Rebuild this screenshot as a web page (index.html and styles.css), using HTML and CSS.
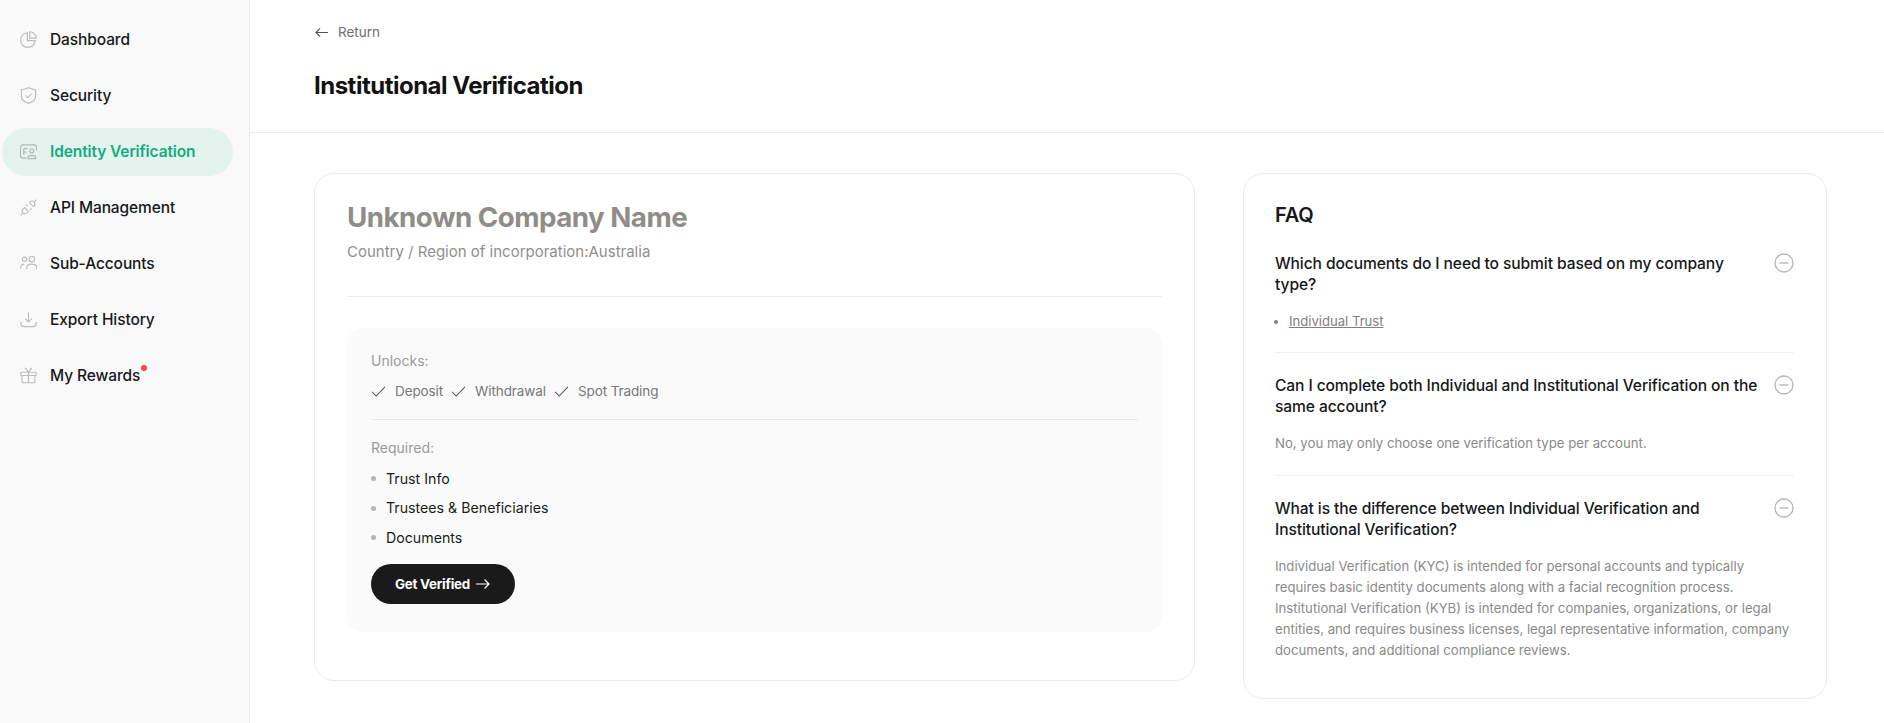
FILE: index.html
```html
<!DOCTYPE html>
<html lang="en">
<head>
<meta charset="utf-8">
<title>Institutional Verification</title>
<link rel="stylesheet" href="styles.css">
</head>
<body>
<div class="app">
  <aside class="sidebar">
    <a class="nav-item"><svg class="nav-icon" viewBox="0 0 18 18"><path d="M7.800 1.800a7.800 7.800 0 1 0 8.400 8.400H7.800z"/><path d="M10.200 .8v6.800h7a7 7 0 0 0-7-6.800z"/></svg><span>Dashboard</span></a>
    <a class="nav-item"><svg class="nav-icon" viewBox="0 0 18 18"><path d="M9 .8l7.500 2.400v6.300c0 3.900-3.300 6.400-7.500 7.800-4.200-1.400-7.500-3.900-7.500-7.800V3.200z"/><path d="M5.800 8.800L8.200 11.200 12.300 7.200"/></svg><span>Security</span></a>
    <a class="nav-item is-active"><svg class="nav-icon" viewBox="0 0 18 18"><path d="M7 16H3a2.500 2.500 0 0 1-2.500-2.500v-9A2.500 2.500 0 0 1 3 2h12a2.500 2.500 0 0 1 2.500 2.500V8"/><path d="M4 6h4M4 9.500h3M4 6v6.500"/><circle cx="12.500" cy="8.500" r="2.100"/><path d="M8.600 16.500v-1.300c0-1 .8-1.800 1.800-1.800h4.300c1 0 1.800.8 1.800 1.800v1.300z"/></svg><span>Identity Verification</span></a>
    <a class="nav-item"><svg class="nav-icon" viewBox="0 0 18 18"><path d="M4.800 9l4.200 4.200-1.800 1.800a3 3 0 0 1-4.200-4.200zM10 3.800L14.200 8l1-1a3 3 0 0 0-4.200-4.200z"/><path d="M2.800 15.200L.8 17.200M15.200 2.800l2-2M6.200 7.600L8.200 5.700M10.400 11.800l1.900-1.900"/></svg><span>API Management</span></a>
    <a class="nav-item"><svg class="nav-icon" viewBox="0 0 18 18"><circle cx="4.800" cy="4.500" r="2.300"/><circle cx="12.500" cy="4.300" r="3"/><path d="M.8 14.500v-1.300c0-2.100 1.500-3.500 3.800-3.500M7.200 15v-1.500c0-2.200 2.100-3.800 5.300-3.800s5.300 1.600 5.300 3.800V15"/></svg><span>Sub-Accounts</span></a>
    <a class="nav-item"><svg class="nav-icon" viewBox="0 0 18 18"><path d="M9 1.500v10M5.500 8.200L9 11.700l3.500-3.500M1 11.500v2c0 1.800 1.400 3 3.100 3h9.800c1.700 0 3.100-1.200 3.100-3v-2"/></svg><span>Export History</span></a>
    <a class="nav-item"><svg class="nav-icon" viewBox="0 0 18 18"><rect x=".8" y="5.500" width="16.400" height="3.500" rx=".8"/><path d="M2.200 9v6.300c0 .8.600 1.400 1.400 1.400h10.800c.8 0 1.400-.6 1.400-1.400V9M9 5.500v11.200M9 5.500L5.500 1M9 5.500L12.500 1"/></svg><span class="has-dot">My Rewards</span></a>
  </aside>
  <main class="main">
    <header class="page-head">
      <a class="back"><svg class="back-icon" viewBox="0 0 16 16"><path d="M15 8H2M6.500 3.500L2 8l4.500 4.500"/></svg>Return</a>
      <h1 class="page-title">Institutional Verification</h1>
    </header>
    <div class="content">
      <section class="card company">
        <h2 class="company-name">Unknown Company Name</h2>
        <p class="company-sub">Country / Region of incorporation:Australia</p>
        <div class="panel">
          <div class="label">Unlocks:</div>
          <div class="unlocks">
            <span class="unlock"><svg class="check" viewBox="0 0 16 12"><path d="M1 6.500l4.500 4.500L15 1"/></svg>Deposit</span>
            <span class="unlock"><svg class="check" viewBox="0 0 16 12"><path d="M1 6.500l4.500 4.500L15 1"/></svg>Withdrawal</span>
            <span class="unlock"><svg class="check" viewBox="0 0 16 12"><path d="M1 6.500l4.500 4.500L15 1"/></svg>Spot Trading</span>
          </div>
          <div class="label label-req">Required:</div>
          <ul class="req-list">
            <li>Trust Info</li>
            <li>Trustees &amp; Beneficiaries</li>
            <li>Documents</li>
          </ul>
          <button class="cta">Get Verified<svg class="cta-icon" viewBox="0 0 14 12"><path d="M0 6h13M8.500 1.500L13 6l-4.500 4.500"/></svg></button>
        </div>
      </section>
      <aside class="card faq">
        <h2 class="faq-title">FAQ</h2>
        <div class="faq-item">
          <div class="faq-q"><span>Which documents do I need to submit based on my company type?</span><svg class="minus" viewBox="0 0 20 20"><circle cx="10" cy="10" r="9"/><path d="M5.500 10h9"/></svg></div>
          <ul class="faq-links"><li><a>Individual Trust</a></li></ul>
        </div>
        <div class="faq-item">
          <div class="faq-q"><span>Can I complete both Individual and Institutional Verification on the same account?</span><svg class="minus" viewBox="0 0 20 20"><circle cx="10" cy="10" r="9"/><path d="M5.500 10h9"/></svg></div>
          <p class="faq-a">No, you may only choose one verification type per account.</p>
        </div>
        <div class="faq-item">
          <div class="faq-q"><span>What is the difference between Individual Verification and Institutional Verification?</span><svg class="minus" viewBox="0 0 20 20"><circle cx="10" cy="10" r="9"/><path d="M5.500 10h9"/></svg></div>
          <p class="faq-a">Individual Verification (KYC) is intended for personal accounts and typically requires basic identity documents along with a facial recognition process. Institutional Verification (KYB) is intended for companies, organizations, or legal entities, and requires business licenses, legal representative information, company documents, and additional compliance reviews.</p>
        </div>
      </aside>
    </div>
  </main>
</div>
</body>
</html>
```
FILE: styles.css
```css
* { box-sizing: border-box; }
html, body { margin: 0; height: 100%; background: #fff; overflow: hidden; }
body { font-family: Inter, "Liberation Sans", sans-serif; color: #16181a; }
a { color: inherit; text-decoration: none; }
svg { fill: none; stroke: currentColor; flex: none; display: block; }
.app { display: flex; height: 723px; }

.sidebar { width: 250px; flex: none; background: #f9f9f9; border-right: 1px solid #ebebeb; padding: 15.500px 16px 0 2px; display: flex; flex-direction: column; gap: 8px; }
.nav-item { display: flex; align-items: center; gap: 13px; height: 48px; padding-left: 18px; border-radius: 24px; font-size: 15.500px; font-weight: 500; letter-spacing: -0.1px; }
.nav-icon { width: 17px; height: 17px; color: #bcbcbc; stroke-width: 1.200; }
.is-active { background: #e4f3ed; color: #12ad7f; font-weight: 600; }
.is-active .nav-icon { color: #b2b8b5; }
.has-dot { position: relative; }
.has-dot::after { content: ""; position: absolute; top: -1px; right: -7px; width: 6px; height: 6px; border-radius: 50%; background: #f04a4e; }

.main { flex: 1; min-width: 0; }
.page-head { height: 133px; padding: 23px 64px 0; border-bottom: 1px solid #ebebeb; }
.back { display: flex; align-items: center; gap: 9px; font-size: 13.500px; line-height: 18px; color: #6f6f6f; }
.back-icon { width: 15px; height: 15px; stroke-width: 1.200; color: #555; }
.page-title { margin: 29px 0 0; font-size: 24px; line-height: 32px; font-weight: 700; letter-spacing: -0.5px; color: #121212; }

.content { display: flex; align-items: flex-start; gap: 48px; padding: 40px 57px 0 64px; }
.card { border: 1px solid #ebebeb; border-radius: 20px; background: #fff; }
.company { width: 881px; flex: none; height: 508px; padding: 26px 32px 0; }
.company-name { margin: 0; font-size: 27.700px; line-height: 34px; font-weight: 700; letter-spacing: -0.5px; color: #8f8d8a; }
.company-sub { margin: 8px 0 0; padding-bottom: 34px; font-size: 15px; line-height: 20px; color: #8f8f8f; border-bottom: 1px solid #ededed; }
.panel { margin-top: 31px; height: 304px; padding: 24px; background: #fafafa; border-radius: 16px; }
.label { font-size: 14px; line-height: 18px; color: #9a9a9a; }
.unlocks { display: flex; gap: 8px; margin-top: 12px; padding-bottom: 19px; border-bottom: 1px solid #e8e8e8; }
.unlock { display: flex; align-items: center; gap: 9px; font-size: 13.500px; line-height: 18px; letter-spacing: -0.1px; color: #777; }
.check { width: 15px; height: 11px; stroke-width: 1.100; color: #555; }
.label-req { margin-top: 19px; }
.req-list { margin: 11.500px 0 0; padding: 0; list-style: none; display: flex; flex-direction: column; gap: 9.500px; }
.req-list li { display: flex; align-items: center; gap: 10px; font-size: 14.200px; line-height: 20px; color: #1a1a1a; }
.req-list li::before { content: ""; width: 5px; height: 5px; border-radius: 50%; background: #b5b5b5; }
.cta { display: flex; align-items: center; gap: 6px; height: 40px; margin-top: 16.500px; padding: 0 25px 0 24px; border: 0; border-radius: 20px; background: #1a1a1a; color: #fff; font: 700 13.400px Inter, "Liberation Sans", sans-serif; letter-spacing: -0.25px; }
.cta-icon { width: 14px; height: 12px; stroke-width: 1.200; }

.faq { flex: 1; height: 526px; padding: 28px 32px 0 31px; }
.faq-title { margin: 0; font-size: 20px; line-height: 26px; font-weight: 600; letter-spacing: -0.2px; color: #16181a; }
.faq-item { padding: 22px 0 21px; border-bottom: 1px solid #f0f0f0; }
.faq-item:first-of-type { padding-top: 25px; padding-bottom: 20px; }
.faq-item:last-child { border-bottom: 0; }
.faq-q { display: flex; justify-content: space-between; gap: 16px; font-size: 15.600px; line-height: 21px; font-weight: 500; letter-spacing: -0.1px; color: #16181a; }
.minus { width: 20px; height: 20px; color: #b5b5b5; stroke-width: 1.300; }
.faq-links { margin: 16px 0 0; padding: 0 0 0 14px; font-size: 13.100px; line-height: 21px; color: #808080; }
.faq-links a { text-decoration: underline; }
.faq-a { margin: 16px 0 0; font-size: 13.200px; line-height: 21px; color: #8a8a8a; }
```
